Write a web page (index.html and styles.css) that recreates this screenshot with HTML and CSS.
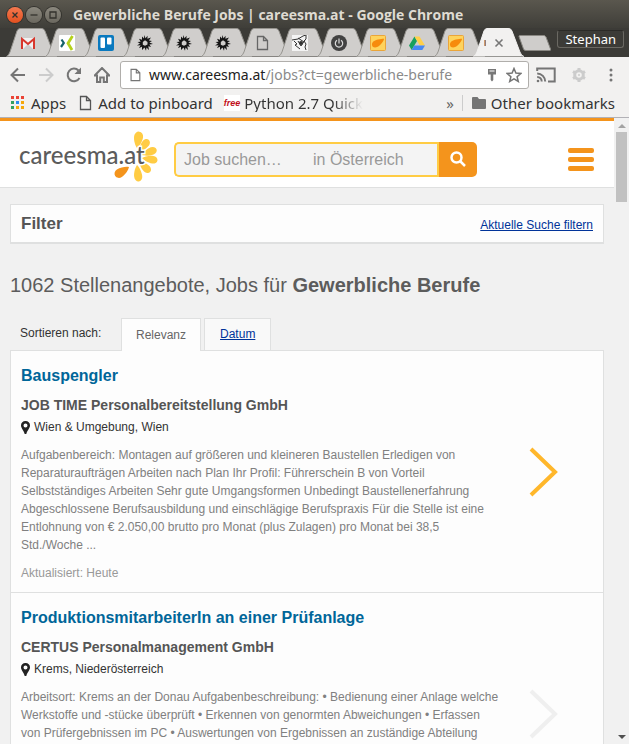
FILE: index.html
```html
<!DOCTYPE html>
<html lang="de">
<head>
<meta charset="utf-8">
<title>Gewerbliche Berufe Jobs | careesma.at</title>
<link rel="stylesheet" href="styles.css">
</head>
<body>
<svg class="defs" aria-hidden="true">
  <defs>
    <symbol id="tab" viewBox="0 0 51 29" preserveAspectRatio="none"><path d="M.5 28.500 Q3 27 4 24 L11 3 Q12 .5 14 .5 H36 Q38 .5 39 3 L47 24 Q48.500 28 51 28.500" stroke-width="1"/></symbol>
    <symbol id="page" viewBox="0 0 16 16"><path d="M3.500 1.500h6l4 4v9h-10zM9.500 1.500v4h4" fill="none" stroke="currentColor" stroke-width="1.300"/></symbol>
    <symbol id="burst" viewBox="0 0 16 16"><path fill="#151515" fill-rule="evenodd" d="M7.300 0L8.500 3.300 10.600.8 10.400 3.800 14 2.500 11.900 5.600 15 6 12.400 7.500 16 9 12.400 9.400 14 12 11.300 11.300 12 15 9.500 12.400 9 15.800 7.500 12.600 5 15 5 11.800 2 13 3.600 10.200 0 10.500 3 8.500.5 7 3.600 6.800 2 3.800 5 4.800 5 1.500 7 3.600zM8 5.300L5.800 7v2.800l2.200.9 2.500-1.200V7z"/></symbol>
    <symbol id="seed" viewBox="0 0 16 16"><rect x=".5" y=".5" width="15" height="15" rx="1" fill="#fed35d" stroke="#eaa53a"/><path fill="#f78b0c" d="M2 10C1.500 7 5 5 8 4.500c3-.5 5-1 6-.8C14 6 11 9 9 11c-2 1.700-6.500 2.500-7-1z"/></symbol>
    <symbol id="pin" viewBox="0 0 9 13"><path fill="#222" fill-rule="evenodd" d="M4.500 0A4.400 4.400 0 0 1 9 4.500C9 7 6.500 9 5.300 13H3.700C2.500 9 0 7 0 4.500A4.400 4.400 0 0 1 4.500 0zm0 2.500a2 2 0 1 0 0 4 2 2 0 0 0 0-4z"/></symbol>
    <symbol id="chevron" viewBox="0 0 30 50"><path d="M2 2l24 23L2 48" fill="none" stroke="currentColor" stroke-width="4"/></symbol>
    <path id="petal" d="M0 0C-2-2-4.500-7-4.500-11.500A4.500 5 0 0 1 4.500-11.500C4.500-7 2-2 0 0z"/>
  </defs>
</svg>

<div class="chrome">
  <div class="titlebar">
    <button class="wm close" aria-label="Schließen"><svg viewBox="0 0 16 16"><path d="M5.500 5.500l5 5m0-5l-5 5"/></svg></button>
    <button class="wm" aria-label="Minimieren"><svg viewBox="0 0 16 16"><path d="M4.500 8h7"/></svg></button>
    <button class="wm" aria-label="Maximieren"><svg viewBox="0 0 16 16"><path d="M5 5h6v6H5z"/></svg></button>
    <span class="window-title">Gewerbliche Berufe Jobs | careesma.at - Google Chrome</span>
  </div>

  <div class="tabstrip">
    <ul class="tabs">
      <li><svg class="shape"><use href="#tab"/></svg><svg class="fav" viewBox="0 0 16 16"><path fill="#f1f1f1" d="M1 3h14v11H1z"/><path fill="#ccc" d="M3 14l5-5 5 5z"/><path fill="none" stroke="#d8372d" stroke-width="2" d="M2 14V4l6 5 6-5v10"/></svg></li>
      <li><svg class="shape"><use href="#tab"/></svg><svg class="fav" viewBox="0 0 16 16"><rect width="16" height="16" rx="1" fill="#fff"/><path fill="none" stroke="#15626a" stroke-width="2.200" d="M2.500 4.500l2.300 3.500L2 12"/><path fill="none" stroke="#b5d11c" stroke-width="2.800" d="M13.500 1L9 8.200l4 6.800"/></svg></li>
      <li><svg class="shape"><use href="#tab"/></svg><svg class="fav" viewBox="0 0 16 16"><rect width="16" height="16" rx="2" fill="#0a79bf"/><rect x="2.500" y="2.500" width="4.500" height="10.500" rx="1" fill="#fff"/><rect x="9" y="2.500" width="4.500" height="7" rx="1" fill="#fff"/></svg></li>
      <li><svg class="shape"><use href="#tab"/></svg><svg class="fav"><use href="#burst"/></svg></li>
      <li><svg class="shape"><use href="#tab"/></svg><svg class="fav"><use href="#burst"/></svg></li>
      <li><svg class="shape"><use href="#tab"/></svg><svg class="fav"><use href="#burst"/></svg></li>
      <li><svg class="shape"><use href="#tab"/></svg><svg class="fav"><use href="#page"/></svg></li>
      <li><svg class="shape"><use href="#tab"/></svg><svg class="fav" viewBox="0 0 16 16"><path fill="#f4f4f4" d="M0 0h16v16H0z"/><path fill="none" stroke="#333" d="M0 5l6-1 5-3 3-1v4l-2 2 2 3-1 3 1 3M2 6l3 3-2 1 5 4M6 6l3 5 4-6M6 3l6 4"/><circle cx="9" cy="8" r="2" fill="#333"/></svg></li>
      <li><svg class="shape"><use href="#tab"/></svg><svg class="fav" viewBox="0 0 16 16"><circle cx="8" cy="8" r="8" fill="#424242"/><path fill="none" stroke="#ddd" stroke-width="1.200" d="M6 5.300a3.700 3.700 0 1 0 4 0M8 3.500v5"/></svg></li>
      <li><svg class="shape"><use href="#tab"/></svg><svg class="fav"><use href="#seed"/></svg></li>
      <li><svg class="shape"><use href="#tab"/></svg><svg class="fav" viewBox="0 0 16 16"><path fill="#18a05e" d="M5.500 1.500L0 10.500l2.700 4.500L8 6z"/><path fill="#ffcf48" d="M5.500 1.500h5L16 10.500h-5.200z"/><path fill="#4688f4" d="M5.300 10.500H16L13.300 15H2.700z"/></svg></li>
      <li><svg class="shape"><use href="#tab"/></svg><svg class="fav"><use href="#seed"/></svg></li>
      <li class="active"><svg class="shape"><use href="#tab"/></svg><i class="sliver"></i><button class="tab-close" aria-label="Tab schließen"><svg viewBox="0 0 10 10"><path d="M1.500 1.500l7 7m0-7l-7 7"/></svg></button></li>
    </ul>
    <button class="new-tab" aria-label="Neuer Tab"><svg viewBox="0 0 34 16"><path d="M1 1.500Q1 .5 2 .5H26Q27 .5 28 2L32.500 14Q33 15.500 31.500 15.500H8Q6 15.500 5.500 14z"/></svg></button>
    <button class="profile">Stephan</button>
  </div>

  <div class="toolbar">
    <button class="tool" aria-label="Zurück"><svg viewBox="0 0 16 16"><path d="M15 8H2M8 1.500L1.500 8 8 14.500"/></svg></button>
    <button class="tool off" aria-label="Vorwärts"><svg viewBox="0 0 16 16"><path d="M1 8h13M8 1.500L14.500 8 8 14.500"/></svg></button>
    <button class="tool" aria-label="Neu laden"><svg viewBox="0 0 16 16"><path d="M13.500 11A6.300 6.300 0 1 1 12.500 3.500"/><path class="solid" d="M15 .5v6.500H8.500z"/></svg></button>
    <button class="tool" aria-label="Startseite"><svg viewBox="0 0 16 16"><path d="M.7 8.500L8 1l7.300 7.500H13V15H9.800v-4.500H6.200V15H3V8.500z"/></svg></button>
    <div class="omnibox">
      <svg class="doc"><use href="#page"/></svg>
      <div class="url" role="textbox" aria-label="Adresse">www.careesma.at<span>/jobs?ct=gewerbliche-berufe</span></div>
      <svg class="key" viewBox="0 0 10 14"><path fill="#777" fill-rule="evenodd" d="M1 1h8v5.500H6.300V12L5 13.500 3.700 12V6.500H1zM2.500 2.500v1h5v-1z"/></svg>
      <svg class="star" viewBox="0 0 16 16"><path d="M8 1.500l1.900 4.600 4.900.4-3.700 3.200 1.200 4.800L8 11.900l-4.300 2.600 1.200-4.800L1.200 6.500l4.900-.4z"/></svg>
    </div>
    <button class="tool wide" aria-label="Streamen"><svg viewBox="0 0 20 16"><path d="M1.200 4V1.500h17.500v13H12M1.200 6.500a8 8 0 0 1 8 8M1.200 10a4.500 4.500 0 0 1 4.500 4.500"/><circle class="solid" cx="2" cy="14" r="1.300"/></svg></button>
    <button class="tool off" aria-label="Einstellungen"><svg viewBox="0 0 16 16"><circle cx="8" cy="8" r="4.300" stroke-width="3"/><path stroke-width="3" d="M8 1v2M8 13v2M2 4.500l1.700 1M12.300 10.500l1.700 1M14 4.500l-1.700 1M3.700 10.500l-1.700 1"/><circle cx="8" cy="8" r="1" class="solid"/></svg></button>
    <button class="tool dots" aria-label="Menü"><svg viewBox="0 0 4 14"><circle cx="2" cy="2" r="1.500"/><circle cx="2" cy="7" r="1.500"/><circle cx="2" cy="12" r="1.500"/></svg></button>
  </div>

  <div class="bookmarks">
    <a class="bm" href="#"><svg class="apps" viewBox="0 0 13 13"><path fill="#ea4335" d="M0 0h3v3H0zM5 0h3v3H5zM10 0h3v3h-3z"/><path fill="#34a060" d="M0 5h3v3H0zM0 10h3v3H0z"/><path fill="#2b8cf0" d="M5 5h3v3H5z"/><path fill="#f5a80c" d="M10 5h3v3h-3zM5 10h3v3H5zM10 10h3v3h-3z"/></svg>Apps</a>
    <a class="bm pinboard" href="#"><svg class="bm-page"><use href="#page"/></svg>Add to pinboard</a>
    <a class="bm python" href="#"><span class="free">free</span><span class="fade">Python 2.7 Quick</span></a>
    <span class="more">»</span>
    <a class="bm other" href="#"><svg class="folder" viewBox="0 0 14 12"><path fill="#757575" d="M1 0h4.500L7 2h6q1 0 1 1v8q0 1-1 1H1q-1 0-1-1V1q0-1 1-1z"/></svg>Other bookmarks</a>
  </div>
</div>

<div class="viewport">
  <main class="site">
    <header class="head">
      <a class="logo" href="#" aria-label="careesma.at"><svg viewBox="0 0 140 52">
        <g fill="#ffcc44">
          <use href="#petal" transform="translate(117 18) rotate(8)"/>
          <use href="#petal" transform="translate(119 22) rotate(38) scale(.85 .95)"/>
          <use href="#petal" transform="translate(122 25) rotate(68) scale(.85 .95)"/>
          <use href="#petal" transform="translate(122 28) rotate(99) scale(.85 .95)"/>
          <use href="#petal" transform="translate(119 31) rotate(135) scale(.85 .95)"/>
          <use href="#petal" transform="translate(117 35) rotate(174) scale(.9 1)"/>
        </g>
        <use href="#petal" fill="#f4941c" transform="translate(109 37) rotate(237)"/>
        <text x="-1" y="34">careesma.at</text>
      </svg></a>
      <form class="search">
        <input class="what" aria-label="Job suchen" placeholder="Job suchen…">
        <input class="where" aria-label="Ort" placeholder="in Österreich">
        <button type="button" aria-label="Suchen"><svg viewBox="0 0 16 16"><circle cx="6.500" cy="6.500" r="5"/><path d="M10 10l5 5"/></svg></button>
      </form>
      <button class="burger" aria-label="Menü"><i></i><i></i><i></i></button>
    </header>

    <div class="content">
      <section class="filter"><h2>Filter</h2><a href="#">Aktuelle Suche filtern</a></section>
      <h1>1062 Stellenangebote, Jobs für <b>Gewerbliche Berufe</b></h1>
      <nav class="sort">
        <span class="sort-label">Sortieren nach:</span>
        <span class="sort-tab current">Relevanz</span>
        <a class="sort-tab" href="#">Datum</a>
      </nav>
      <div class="results">
        <article class="job">
          <div class="text">
            <h3><a href="#">Bauspengler</a></h3>
            <h4>JOB TIME Personalbereitstellung GmbH</h4>
            <p class="place"><svg><use href="#pin"/></svg>Wien &amp; Umgebung, Wien</p>
            <p class="desc">Aufgabenbereich: Montagen auf größeren und kleineren Baustellen Erledigen von Reparaturaufträgen Arbeiten nach Plan Ihr Profil: Führerschein B von Vorteil Selbstständiges Arbeiten Sehr gute Umgangsformen Unbedingt Baustellenerfahrung Abgeschlossene Berufsausbildung und einschlägige Berufspraxis Für die Stelle ist eine Entlohnung von € 2.050,00 brutto pro Monat (plus Zulagen) pro Monat bei 38,5 Std./Woche ...</p>
            <p class="date">Aktualisiert: Heute</p>
          </div>
          <svg class="chevron hot"><use href="#chevron"/></svg>
        </article>
        <article class="job">
          <div class="text">
            <h3><a href="#">ProduktionsmitarbeiterIn an einer Prüfanlage</a></h3>
            <h4>CERTUS Personalmanagement GmbH</h4>
            <p class="place"><svg><use href="#pin"/></svg>Krems, Niederösterreich</p>
            <p class="desc">Arbeitsort: Krems an der Donau Aufgabenbeschreibung: • Bedienung einer Anlage welche Werkstoffe und -stücke überprüft • Erkennen von genormten Abweichungen • Erfassen von Prüfergebnissen im PC • Auswertungen von Ergebnissen an zuständige Abteilung</p>
          </div>
          <svg class="chevron"><use href="#chevron"/></svg>
        </article>
      </div>
    </div>
  </main>
  <div class="scrollbar"><i class="up"></i><i class="thumb"></i><i class="down"></i></div>
</div>
</body>
</html>
```
FILE: styles.css
```css
* { box-sizing: border-box; }
body {
  margin: 0;
  height: 100vh;
  overflow: hidden;
  display: flex;
  flex-direction: column;
  font: 12px/18px "Liberation Sans", Arial, sans-serif;
  color: #333;
}
button { padding: 0; border: 0; background: none; font: inherit; color: inherit; }
h1, h2, h3, h4, p, ul { margin: 0; padding: 0; }
svg { display: block; flex: none; }
.defs { position: absolute; width: 0; height: 0; }

/* window frame */
.chrome {
  flex: none;
  font-family: "Noto Sans", "Open Sans", sans-serif;
  background: #f2f1f0;
  border-bottom: 1px solid #b2b1b6;
}
.titlebar {
  display: flex;
  align-items: center;
  gap: 3px;
  height: 28px;
  padding: 1px 7px 0;
  background: linear-gradient(#5a574e, #3f3e39);
}
.wm {
  width: 16px;
  height: 16px;
  border-radius: 50%;
  background: linear-gradient(#8b887e, #6b685f);
  box-shadow: 0 0 0 1px #34332e;
}
.wm.close { background: linear-gradient(#f4784f, #e3501f); }
.wm svg { width: 16px; height: 16px; fill: none; stroke: #33322d; stroke-width: 1.300; }
.window-title {
  margin-left: 9px;
  font-family: "Open Sans", "Noto Sans", sans-serif;
  font-size: 14px;
  font-weight: 700;
  color: #dfdbd2;
  white-space: nowrap;
}
.tabstrip {
  display: flex;
  height: 29px;
  background: #3c3b37;
}
.tabs {
  display: flex;
  flex: 0 1 506px;
  margin-left: 6px;
  list-style: none;
}
.tabs li { position: relative; flex: 1; padding: 7px 0 0 14px; z-index: 0; }
.tabs .shape {
  position: absolute;
  z-index: -1;
  left: 0;
  top: 0;
  width: calc(100% + 12px);
  height: 29px;
  fill: #d0cecc;
  stroke: #96948f;
}
.tabs .active { z-index: 2; display: flex; gap: 8px; align-items: flex-start; }
.tabs .active .shape { fill: #f2f1f0; stroke: #f2f1f0; }
.fav { width: 16px; height: 16px; color: #666; }
.sliver { width: 2px; height: 6px; margin: 5px 0 0 -3px; background: linear-gradient(90deg, #f0a860, #70708a); }
.tab-close { width: 10px; height: 10px; margin-top: 3px; }
.tab-close svg { width: 10px; height: 10px; stroke: #777; stroke-width: 1.600; }
.new-tab { margin: 7px 0 0 6px; align-self: flex-start; }
.new-tab svg { width: 34px; height: 16px; fill: #cfcdcb; stroke: #8a8883; }
.profile {
  height: 18px;
  margin: 2px 5px 0 auto;
  padding: 0 7px;
  border: 1px solid #6b6963;
  border-top-color: #2b2a27;
  border-radius: 3px;
  font-size: 13px;
  line-height: 16px;
  color: #fff;
}
.toolbar {
  display: flex;
  align-items: center;
  gap: 12px;
  height: 36px;
  padding: 0 16px 0 10px;
}
.tool svg { width: 16px; height: 16px; fill: none; stroke: #757575; stroke-width: 2; }
.tool .solid { fill: #757575; stroke: none; }
.tool.off svg { stroke: #ccc; }
.tool.off .solid { fill: #ccc; }
.tool.wide { margin: 0 3px 0 -5px; }
.tool.wide svg { width: 20px; }
.tool.dots { margin-left: 10px; }
.tool.dots svg { width: 4px; height: 14px; fill: #757575; stroke: none; }
.omnibox {
  flex: 1;
  display: flex;
  align-items: center;
  min-width: 0;
  height: 28px;
  margin-left: -2px;
  padding: 0 6px 0 7px;
  border: 1px solid #b0aeab;
  border-radius: 3px;
  background: #fff;
}
.doc { width: 14px; height: 14px; color: #757575; }
.url {
  flex: 1;
  margin-left: 7px;
  font-size: 14px;
  color: #222;
  white-space: nowrap;
}
.url span { color: #8a8a8a; }
.key { width: 10px; height: 14px; margin-right: 9px; }
.star { width: 16px; height: 16px; fill: none; stroke: #757575; stroke-width: 1.500; }
.bookmarks {
  display: flex;
  align-items: center;
  height: 24px;
  padding: 0 14px 5px 11px;
  font-size: 15px;
}
.bm { display: flex; align-items: center; color: #333; text-decoration: none; white-space: nowrap; }
.apps { width: 13px; height: 13px; margin-right: 7px; }
.pinboard { margin-left: 11px; }
.bm-page { width: 16px; height: 16px; margin-right: 5px; color: #555; }
.python { margin-left: 11px; }
.free {
  margin-right: 4px;
  background: #fff;
  font: italic 700 9px/16px "Liberation Sans", sans-serif;
  color: #c00d1a;
}
.fade { background: linear-gradient(90deg, #333 75%, #f2f1f0); background-clip: text; color: transparent; }
.more { margin-left: auto; color: #666; }
.other { margin-left: 8px; padding-left: 9px; border-left: 1px solid #ccc; height: 16px; }
.folder { width: 14px; height: 12px; margin-right: 5px; }

/* web page */
.viewport { flex: 1; display: flex; min-height: 0; background: #f1f1f1; }
.site { flex: 1; min-width: 0; overflow: hidden; border-top: 3px solid #f4941c; }
.head {
  display: flex;
  align-items: center;
  height: 67px;
  padding: 0 20px;
  background: #fff;
  border-bottom: 1px solid #dfe0e0;
}
.logo svg { width: 140px; height: 52px; margin-top: 4px; overflow: visible; }
.logo text {
  font: 500 24px Lato, sans-serif;
  fill: #5c5c5c;
  stroke: #fff;
  stroke-width: 3px;
  paint-order: stroke;
}
.search { display: flex; height: 35px; margin: 10px 0 0 14px; }
.search input {
  height: 35px;
  border: 2px solid #ffcc44;
  background: #f4f4f4;
  font: 16px "Liberation Sans", Arial, sans-serif;
  color: #333;
}
.search input::placeholder { color: #999; opacity: 1; }
.what { width: 131px; padding: 1px 8px 0; border-right: 0 !important; border-radius: 5px 0 0 5px; }
.where { width: 134px; padding: 1px 8px 0; border-left: 0 !important; }
.search button {
  display: grid;
  place-items: center;
  width: 38px;
  background: #f4941c;
  border-radius: 0 5px 5px 0;
}
.search svg { width: 16px; height: 16px; fill: none; stroke: #fff; stroke-width: 2.500; }
.burger { display: grid; gap: 4px; width: 26px; margin: 10px 0 0 auto; }
.burger i { height: 5px; border-radius: 2px; background: #f4941c; }
.content { padding: 16px 10px 0; }
.filter {
  display: flex;
  align-items: center;
  justify-content: space-between;
  height: 40px;
  padding: 0 10px;
  background: #fdfdfd;
  border: 1px solid #dfe0e0;
  border-bottom-width: 2px;
}
.filter h2 { font-size: 17px; color: #555; }
.filter a { padding-top: 2px; }
.content a { color: #039; }
h1 { margin-top: 29px; font-size: 20px; line-height: 24px; font-weight: 400; color: #5c5c5c; }
.sort { display: flex; align-items: flex-end; height: 33px; margin-top: 21px; padding-left: 10px; }
.sort-label { width: 101px; line-height: 36px; }
.sort-tab {
  height: 33px;
  margin-right: 3px;
  padding: 0 15px;
  line-height: 30px;
  background: #f9f9f9;
  border: 1px solid #dfe0e0;
}
.sort-tab.current {
  position: relative;
  padding: 0 14px;
  line-height: 32px;
  border-bottom: 0;
  background: #fdfdfd;
  color: #666;
}
.results { margin-top: -1px; background: #fdfdfd; border: 1px solid #dfe0e0; }
.job {
  display: flex;
  align-items: center;
  justify-content: space-between;
  min-height: 242px;
  padding: 0 44px 0 10px;
  border-bottom: 1px solid #dfe0e0;
}
.text { flex: 0 1 480px; align-self: flex-start; padding: 15px 0 10px; }
h3 { font-size: 16px; line-height: 20px; }
.job h3 a { color: #069; text-decoration: none; }
h4 { margin-top: 9px; font-size: 14px; line-height: 20px; color: #555; }
.place { display: flex; align-items: center; gap: 4px; margin-top: 3px; }
.place svg { width: 9px; height: 13px; }
.desc { margin-top: 10px; color: #808080; }
.date { margin-top: 10px; color: #999; }
.chevron { width: 30px; height: 50px; color: #efefef; }
.chevron.hot { color: #ffb72b; }

.scrollbar { width: 15px; display: flex; flex-direction: column; align-items: center; padding: 6px 0 5px; background: #f1f1f1; }
.up { border: solid transparent; border-width: 0 4px 4px; border-bottom-color: #a3a3a3; }
.thumb { width: 11px; height: 70px; margin-top: 4px; background: #c1c1c1; }
.down { margin-top: auto; border: solid transparent; border-width: 4px 4px 0; border-top-color: #505050; }
```
